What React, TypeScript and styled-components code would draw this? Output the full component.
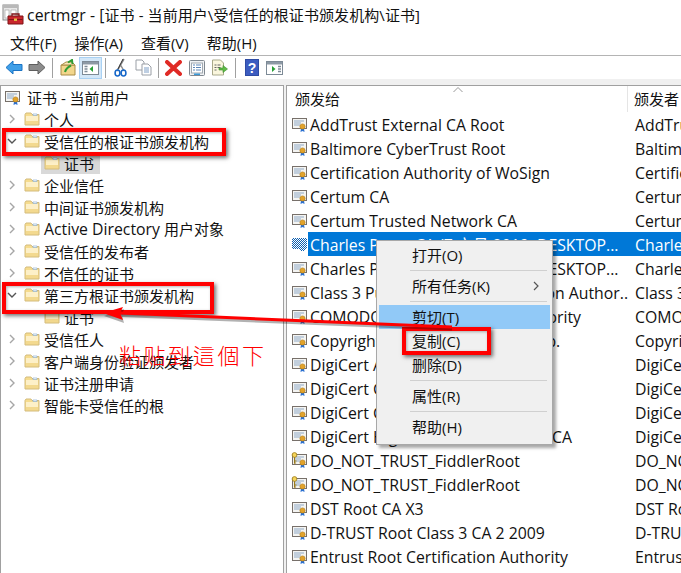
import React from "react";
import styled, { createGlobalStyle } from "styled-components";

const Global = createGlobalStyle`
  html, body { margin: 0; padding: 0; background: #fff; }
  * { box-sizing: border-box; }
`;
const FONT = `"Open Sans", "Noto Sans CJK SC", sans-serif`;

const Win = styled.div`
  position: relative; width: 681px; height: 573px; overflow: hidden; background: #fff;
  display: flex; flex-direction: column; font-family: ${FONT}; font-size: 15px; color: #111; letter-spacing: 0;
`;
const Latin = styled.span`
  font-size: 15.8px;
`;
const TitleBar = styled.div`
  height: 30px; display: flex; align-items: center; gap: 3px; padding-left: 2px; white-space: nowrap; flex: none; letter-spacing: .08px;
`;
const MenuBar = styled.div`
  height: 25px; display: flex; align-items: center; padding-left: 10px; gap: 18px; border-bottom: 1px solid #b4b4b4;
  flex: none; box-sizing: content-box;
`;
const Toolbar = styled.div`
  height: 23px; display: flex; align-items: center; padding-left: 2px; flex: none;
`;
const ToolBtn = styled.div<{ $active?: boolean }>`
  width: 23px; height: 22px; display: flex; align-items: center; justify-content: center;
  background: ${(p) => (p.$active ? "#d3e7f8" : "transparent")};
  border: 1px solid ${(p) => (p.$active ? "#a9d1f3" : "transparent")};
`;
const ToolSep = styled.div<{ $w?: number }>`
  width: ${(p) => p.$w ?? 8}px; height: 20px; display: flex; justify-content: center;
  &::after { content: ""; width: 1px; height: 100%; background: #a0a0a0; }
`;
const Body = styled.div`
  flex: 1; min-height: 0; display: flex; gap: 2px; background: #f0f0f0; padding-top: 6px;
`;
const TreePane = styled.div`
  width: 284px; flex: none; background: #fff; border: 1px solid #a0a0a0; border-bottom: none; overflow: hidden;
`;
const TreeRow = styled.div<{ $level: number }>`
  height: 22px; display: flex; align-items: center; padding-left: ${(p) => (p.$level ? 40 : 1)}px; white-space: nowrap; gap: 2px;
`;
const RootRow = styled.div`
  height: 22px; display: flex; align-items: center; padding-left: 3px; gap: 6px; white-space: nowrap;
`;
const Chevron = styled.span`
  width: 20px; display: flex; justify-content: center;
`;
const TreeLabel = styled.span`
  margin-left: 2px;
`;
const LeafItem = styled.div<{ $sel?: boolean }>`
  display: flex; align-items: center; height: 22px; padding: 0 6px 0 3px; gap: 4px;
  background: ${(p) => (p.$sel ? "#d9d9d9" : "transparent")};
`;
const ListPane = styled.div`
  flex: 1; min-width: 0; background: #fff; border: 1px solid #a0a0a0; border-right: none; border-bottom: none; overflow: hidden;
  position: relative;
`;
const Header = styled.div`
  height: 26px; display: grid; grid-template-columns: 341px 1fr; align-items: center; position: relative;
`;
const HeadCell = styled.div<{ $first?: boolean }>`
  height: 26px; line-height: 27px; padding-left: ${(p) => (p.$first ? 8 : 6)}px; border-right: ${(p) => (p.$first ? "1px solid #e5e5e5" : "none")};
`;
const SortMark = styled.svg`
  position: absolute; left: 165px; top: 0;
`;
const Row = styled.div`
  height: 24px; display: grid; grid-template-columns: 341px 1fr; align-items: center; white-space: nowrap; font-size: 15.8px;
`;
const NameCell = styled.div`
  display: flex; align-items: center; padding-left: 4px; min-width: 0; overflow: hidden; height: 24px;
`;
const NameText = styled.span<{ $sel?: boolean }>`
  flex: 1; height: 24px; line-height: 26px; padding-left: 2px; overflow: hidden;
  background: ${(p) => (p.$sel ? "#0078d7" : "transparent")}; color: ${(p) => (p.$sel ? "#fff" : "inherit")};
`;
const IssuerCell = styled.div<{ $sel?: boolean }>`
  height: 24px; line-height: 26px; padding-left: 7px;
  background: ${(p) => (p.$sel ? "#0078d7" : "transparent")}; color: ${(p) => (p.$sel ? "#fff" : "inherit")};
`;
const CtxMenu = styled.div`
  position: absolute; left: 376px; top: 240px; width: 177px; height: 205px; padding: 2px 2px; background: #f0f0f0;
  border: 1px solid #a8a8a8; box-shadow: 3px 3px 3px rgba(0,0,0,.35); z-index: 2;
`;
const CtxItem = styled.div<{ $hi?: boolean }>`
  height: 24px; line-height: 24px; padding-left: 33px; position: relative; background: ${(p) => (p.$hi ? "#91c9f7" : "transparent")};
`;
const CtxSep = styled.div`
  height: 7px; display: flex; align-items: center; padding: 0 3px 0 31px;
  &::after { content: ""; height: 1px; flex: 1; background: #d0d0d0; }
`;
const SubArrow = styled.svg`
  position: absolute; right: 10px; top: 7px;
`;
const RedBox = styled.div<{ $l: number; $t: number; $w: number; $h: number }>`
  position: absolute; left: ${(p) => p.$l}px; top: ${(p) => p.$t}px; width: ${(p) => p.$w}px; height: ${(p) => p.$h}px;
  border: 4px solid #f00; box-shadow: 2px 2px 4px rgba(0,0,0,.55), inset 1px 1px 3px rgba(0,0,0,.3); z-index: 3;
`;
const ArrowLayer = styled.svg`
  position: absolute; left: 0; top: 0; z-index: 3; pointer-events: none;
`;
const Note = styled.div`
  position: absolute; left: 119px; top: 339px; color: #f00; font-size: 22px; letter-spacing: 2.6px; line-height: 30px;
  font-family: "Noto Sans CJK JP", "Noto Sans CJK SC", sans-serif; font-weight: 300; white-space: nowrap; z-index: 3;
`;

const Folder = () => (
  <svg width="16" height="16" viewBox="0 0 16 16" style={{ flex: "none" }}>
    <path d="M1 3.500V14h14V3.500H8L7 2H2L1 3.500Z" fill="#f6dc8e" stroke="#d3bb7c" strokeWidth="1" />
    <path d="M2 5h12v5H2z" fill="#fdf0c8" />
    <path d="M2 10h12v3H2z" fill="#f3d98f" />
    <path d="M9 3h4v1.500H9z" fill="#fff" stroke="#7ea6d0" strokeWidth=".6" />
  </svg>
);
const Cert = ({ sel, keyed }: { sel?: boolean; keyed?: boolean }) => (
  <svg width="17" height="17" viewBox="0 0 17 17" style={{ flex: "none" }}>
    {sel ? (
      <>
        <defs>
          <pattern id="chk" width="2" height="2" patternUnits="userSpaceOnUse">
            <rect width="2" height="2" fill="#fff" />
            <rect width="1" height="1" fill="#0d5fb0" />
            <rect x="1" y="1" width="1" height="1" fill="#0d5fb0" />
          </pattern>
        </defs>
        <rect x="1" y="2" width="15" height="11" fill="url(#chk)" />
        <rect x="9" y="9" width="5" height="6" fill="url(#chk)" />
      </>
    ) : (
      <>
        <rect x="1.500" y="2.500" width="14" height="10" fill="#f4f4f2" stroke="#77706a" />
        <path d="M3 5h10M3 7h7M3 9h6" stroke="#8fa9c6" strokeWidth="1" />
        <path d="M10 12l-.5 4 2-1 2 1-.5-4z" fill="#2a6fd0" />
        <circle cx="11.500" cy="10.500" r="2.600" fill="#e2a32c" stroke="#b07a12" strokeWidth=".6" />
      </>
    )}
    {keyed && (
      <g>
        <circle cx="3.500" cy="3" r="2.400" fill="#f5d55a" stroke="#9a7a1a" strokeWidth=".8" />
        <path d="M3.500 5.200v6.500M3.500 9h2M3.500 11h1.600" stroke="#9a7a1a" strokeWidth="1.100" fill="none" />
      </g>
    )}
  </svg>
);
const ChevR = () => (
  <svg width="8" height="10" viewBox="0 0 8 10"><path d="M2 1l4 4-4 4" fill="none" stroke="#a6a6a6" strokeWidth="1.400" /></svg>
);
const ChevD = () => (
  <svg width="10" height="8" viewBox="0 0 10 8"><path d="M1 2l4 4 4-4" fill="none" stroke="#555" strokeWidth="1.400" /></svg>
);
const IcoApp = () => (
  <svg width="22" height="24" viewBox="0 0 22 24">
    <rect x="1" y="2" width="15" height="15" fill="#e8e8e8" stroke="#8a8a8a" />
    <rect x="1" y="2" width="15" height="3" fill="#b9b9b9" />
    <rect x="3" y="7" width="4" height="8" fill="#fff" stroke="#9a9a9a" strokeWidth=".6" />
    <path d="M9 7h5v8H9z" fill="#fff" stroke="#9a9a9a" strokeWidth=".6" />
    <path d="M6 13h15v8H6z" fill="#c8262d" stroke="#7e1317" />
    <path d="M10 13v-2h7v2" fill="none" stroke="#7e1317" strokeWidth="1.300" />
    <rect x="6.500" y="16" width="14" height="1" fill="#7e1317" />
    <rect x="12" y="15.500" width="3" height="2.400" fill="#e9c04a" />
  </svg>
);
const ArrowIco = ({ c1, c2, dir }: { c1: string; c2: string; dir: "l" | "r" }) => (
  <svg width="18" height="15" viewBox="0 0 18 15">
    <path
      d={dir === "l" ? "M1 7.500L8 1v3.500h9v6H8V14z" : "M17 7.500L10 1v3.500H1v6h9V14z"}
      fill={c1}
      stroke={c2}
      strokeWidth="1"
      strokeLinejoin="round"
    />
  </svg>
);
const IcoUp = () => (
  <svg width="16" height="17" viewBox="0 0 16 17">
    <path d="M1 6h14v10H1z" fill="#f2d68c" stroke="#a98c46" />
    <path d="M1.500 6L6 3h6l3 3z" fill="#f8e8b8" stroke="#a98c46" />
    <path d="M5 13c1-4 3-5 6-6.500M8 3.500l4-2.500.5 4" fill="none" stroke="#2f9d33" strokeWidth="2" />
  </svg>
);
const IcoPanel = ({ kind }: { kind: "hide" | "show" }) => (
  <svg width="17" height="14" viewBox="0 0 17 14">
    <rect x=".5" y=".5" width="16" height="13" fill="#fff" stroke="#7d8a96" />
    <rect x="1" y="1" width="15" height="2.500" fill="#8d99a5" />
    <path d={kind === "hide" ? "M2.500 5.500h3M2.500 8h3M2.500 10.500h3" : "M12 5.500h3M12 8h3M12 10.500h3"} stroke="#7d8a96" strokeWidth="1.400" />
    <path d={kind === "hide" ? "M11 5l-3.500 3 3.500 3z" : "M6 5l3.500 3L6 11z"} fill="#27a035" />
  </svg>
);
const IcoCut = () => (
  <svg width="13" height="19" viewBox="0 0 13 19">
    <path d="M3 13L10 1M10 13L6 6" stroke="#8c8c8c" strokeWidth="1.500" fill="none" />
    <path d="M9 1L4 11" stroke="#333" strokeWidth="1" />
    <ellipse cx="3.500" cy="15" rx="2.400" ry="3" fill="none" stroke="#1667c9" strokeWidth="1.600" />
    <ellipse cx="9.500" cy="15" rx="2.400" ry="3" fill="none" stroke="#1667c9" strokeWidth="1.600" />
  </svg>
);
const IcoCopy = () => (
  <svg width="17" height="17" viewBox="0 0 17 17">
    <path d="M1 1h6l2 2v8H1z" fill="#fff" stroke="#9a9fa6" />
    <path d="M7 5h6l3 3v8H7z" fill="#fff" stroke="#9a9fa6" />
    <path d="M9 9h5M9 11h5M9 13h5" stroke="#7f9fc6" />
  </svg>
);
const IcoDel = () => (
  <svg width="17" height="16" viewBox="0 0 17 16">
    <path d="M2 2l13 12M15 2L2 14" stroke="#e02a25" strokeWidth="4" strokeLinecap="round" />
  </svg>
);
const IcoProps = () => (
  <svg width="16" height="16" viewBox="0 0 16 16">
    <rect x=".5" y=".5" width="15" height="15" rx="1" fill="#f0f2f4" stroke="#808890" />
    <rect x="2.500" y="3" width="11" height="10" fill="#fff" stroke="#a0a8b0" />
    <path d="M4 5h2M7 5h5M4 7.500h2M7 7.500h5M4 10h2M7 10h5" stroke="#5b86b8" />
    <rect x="5" y="13.500" width="6" height="1.500" fill="#3a9ad9" />
  </svg>
);
const IcoExport = () => (
  <svg width="17" height="17" viewBox="0 0 17 17">
    <path d="M1.500 1h8l3 3v12h-11z" fill="#faf6dd" stroke="#a9a98a" />
    <path d="M3.500 6h2M3.500 8.500h2M3.500 11h2M6.500 6h3M6.500 8.500h3" stroke="#666" />
    <path d="M8 9h4V6.500l4.500 3.500-4.500 3.500V11H8z" fill="#5fbb46" stroke="#3d8f2c" strokeWidth=".6" />
  </svg>
);
const IcoHelp = () => (
  <svg width="14" height="17" viewBox="0 0 14 17">
    <rect width="14" height="17" fill="#2e4ba3" />
    <rect x="1" y="1" width="12" height="15" fill="#3c5cc0" />
    <text x="7" y="14" textAnchor="middle" fontSize="14" fontWeight="700" fill="#fff" fontFamily="Liberation Sans">?</text>
  </svg>
);

const tree: { t: React.ReactNode; level: number; open?: boolean; sel?: boolean }[] = [
  { t: "个人", level: 0 },
  { t: "受信任的根证书颁发机构", level: 0, open: true },
  { t: "证书", level: 1, sel: true },
  { t: "企业信任", level: 0 },
  { t: "中间证书颁发机构", level: 0 },
  { t: <><Latin>Active Directory </Latin>用户对象</>, level: 0 },
  { t: "受信任的发布者", level: 0 },
  { t: "不信任的证书", level: 0 },
  { t: "第三方根证书颁发机构", level: 0, open: true },
  { t: "证书", level: 1 },
  { t: "受信任人", level: 0 },
  { t: "客户端身份验证颁发者", level: 0 },
  { t: "证书注册申请", level: 0 },
  { t: "智能卡受信任的根", level: 0 },
];

const rows: { n: string; i: string; sel?: boolean; keyed?: boolean }[] = [
  { n: "AddTrust External CA Root", i: "AddTrust External CA Root" },
  { n: "Baltimore CyberTrust Root", i: "Baltimore CyberTrust Root" },
  { n: "Certification Authority of WoSign", i: "Certification Authority" },
  { n: "Certum CA", i: "Certum CA" },
  { n: "Certum Trusted Network CA", i: "Certum Trusted" },
  { n: "Charles Proxy CA (7 六月 2019, DESKTOP...", i: "Charles Proxy", sel: true },
  { n: "Charles Proxy CA (7 六月 2019, DESKTOP...", i: "Charles Proxy" },
  { n: "Class 3 Public Primary Certification Author...", i: "Class 3 Public" },
  { n: "COMODO RSA Certification Authority", i: "COMODO RSA" },
  { n: "Copyright (c) 1997 Microsoft Corp.", i: "Copyright (c)" },
  { n: "DigiCert Assured ID Root CA", i: "DigiCert Assured" },
  { n: "DigiCert Global Root CA", i: "DigiCert Global" },
  { n: "DigiCert Global Root G2", i: "DigiCert Global" },
  { n: "DigiCert High Assurance EV Root CA", i: "DigiCert High" },
  { n: "DO_NOT_TRUST_FiddlerRoot", i: "DO_NOT_TRUST", keyed: true },
  { n: "DO_NOT_TRUST_FiddlerRoot", i: "DO_NOT_TRUST", keyed: true },
  { n: "DST Root CA X3", i: "DST Root CA X3" },
  { n: "D-TRUST Root Class 3 CA 2 2009", i: "D-TRUST Root" },
  { n: "Entrust Root Certification Authority", i: "Entrust Root" },
];

export default function App() {
  return (
    <Win>
      <Global />
      <TitleBar>
        <IcoApp />
        <span><Latin>certmgr - [</Latin>证书 - 当前用户\受信任的根证书颁发机构\证书]</span>
      </TitleBar>
      <MenuBar>
        <span>文件(F)</span>
        <span>操作(A)</span>
        <span>查看(V)</span>
        <span>帮助(H)</span>
      </MenuBar>
      <Toolbar>
        <ToolBtn><ArrowIco dir="l" c1="#3f9fe8" c2="#1b73c4" /></ToolBtn>
        <ToolBtn><ArrowIco dir="r" c1="#8c8c8c" c2="#5e5e5e" /></ToolBtn>
        <ToolSep />
        <ToolBtn><IcoUp /></ToolBtn>
        <ToolBtn $active><IcoPanel kind="hide" /></ToolBtn>
        <ToolSep $w={7} />
        <ToolBtn><IcoCut /></ToolBtn>
        <ToolBtn><IcoCopy /></ToolBtn>
        <ToolSep $w={7} />
        <ToolBtn><IcoDel /></ToolBtn>
        <ToolBtn><IcoProps /></ToolBtn>
        <ToolBtn><IcoExport /></ToolBtn>
        <ToolSep $w={9} />
        <ToolBtn><IcoHelp /></ToolBtn>
        <ToolBtn><IcoPanel kind="show" /></ToolBtn>
      </Toolbar>
      <Body>
        <TreePane>
          <RootRow>
            <Cert />
            <span>证书 - 当前用户</span>
          </RootRow>
          {tree.map((r, i) => (
            <TreeRow key={i} $level={r.level}>
              {r.level === 0 ? (
                <>
                  <Chevron>{r.open ? <ChevD /> : <ChevR />}</Chevron>
                  <Folder />
                  <TreeLabel>{r.t}</TreeLabel>
                </>
              ) : (
                <LeafItem $sel={r.sel}>
                  <Folder />
                  <span>{r.t}</span>
                </LeafItem>
              )}
            </TreeRow>
          ))}
        </TreePane>
        <ListPane>
          <Header>
            <HeadCell $first>颁发给</HeadCell>
            <HeadCell>颁发者</HeadCell>
            <SortMark width="12" height="8" viewBox="0 0 12 8">
              <path d="M1.500 6L6 1.500 10.500 6" fill="none" stroke="#999" />
            </SortMark>
          </Header>
          {rows.map((r, i) => (
            <Row key={i}>
              <NameCell>
                <Cert sel={r.sel} keyed={r.keyed} />
                <NameText $sel={r.sel}>{r.n}</NameText>
              </NameCell>
              <IssuerCell $sel={r.sel}>{r.i}</IssuerCell>
            </Row>
          ))}
        </ListPane>
      </Body>

      <CtxMenu>
        <CtxItem>打开(O)</CtxItem>
        <CtxSep />
        <CtxItem>
          所有任务(K)
          <SubArrow width="8" height="10" viewBox="0 0 8 10">
            <path d="M2 1l4 4-4 4" fill="none" stroke="#555" strokeWidth="1.200" />
          </SubArrow>
        </CtxItem>
        <CtxSep />
        <CtxItem $hi>剪切(T)</CtxItem>
        <CtxItem>复制(C)</CtxItem>
        <CtxItem>删除(D)</CtxItem>
        <CtxSep />
        <CtxItem>属性(R)</CtxItem>
        <CtxSep />
        <CtxItem>帮助(H)</CtxItem>
      </CtxMenu>

      <RedBox $l={2} $t={128} $w={224} $h={28} />
      <RedBox $l={2} $t={282} $w={212} $h={32} />
      <RedBox $l={402} $t={327} $w={89} $h={28} />
      <ArrowLayer width="681" height="573" viewBox="0 0 681 573">
        <path d="M452 329L122 315.500" stroke="rgba(0,0,0,.3)" strokeWidth="3" fill="none" />
        <path d="M104 316L124 309L122 315.500L124 323Z" fill="rgba(0,0,0,.3)" />
        <path d="M452 327L120 313" stroke="#f00" strokeWidth="3" fill="none" />
        <path d="M103 313L123 307L120 313L123 320Z" fill="#f00" />
      </ArrowLayer>
      <Note>粘贴到這個下</Note>
    </Win>
  );
}
